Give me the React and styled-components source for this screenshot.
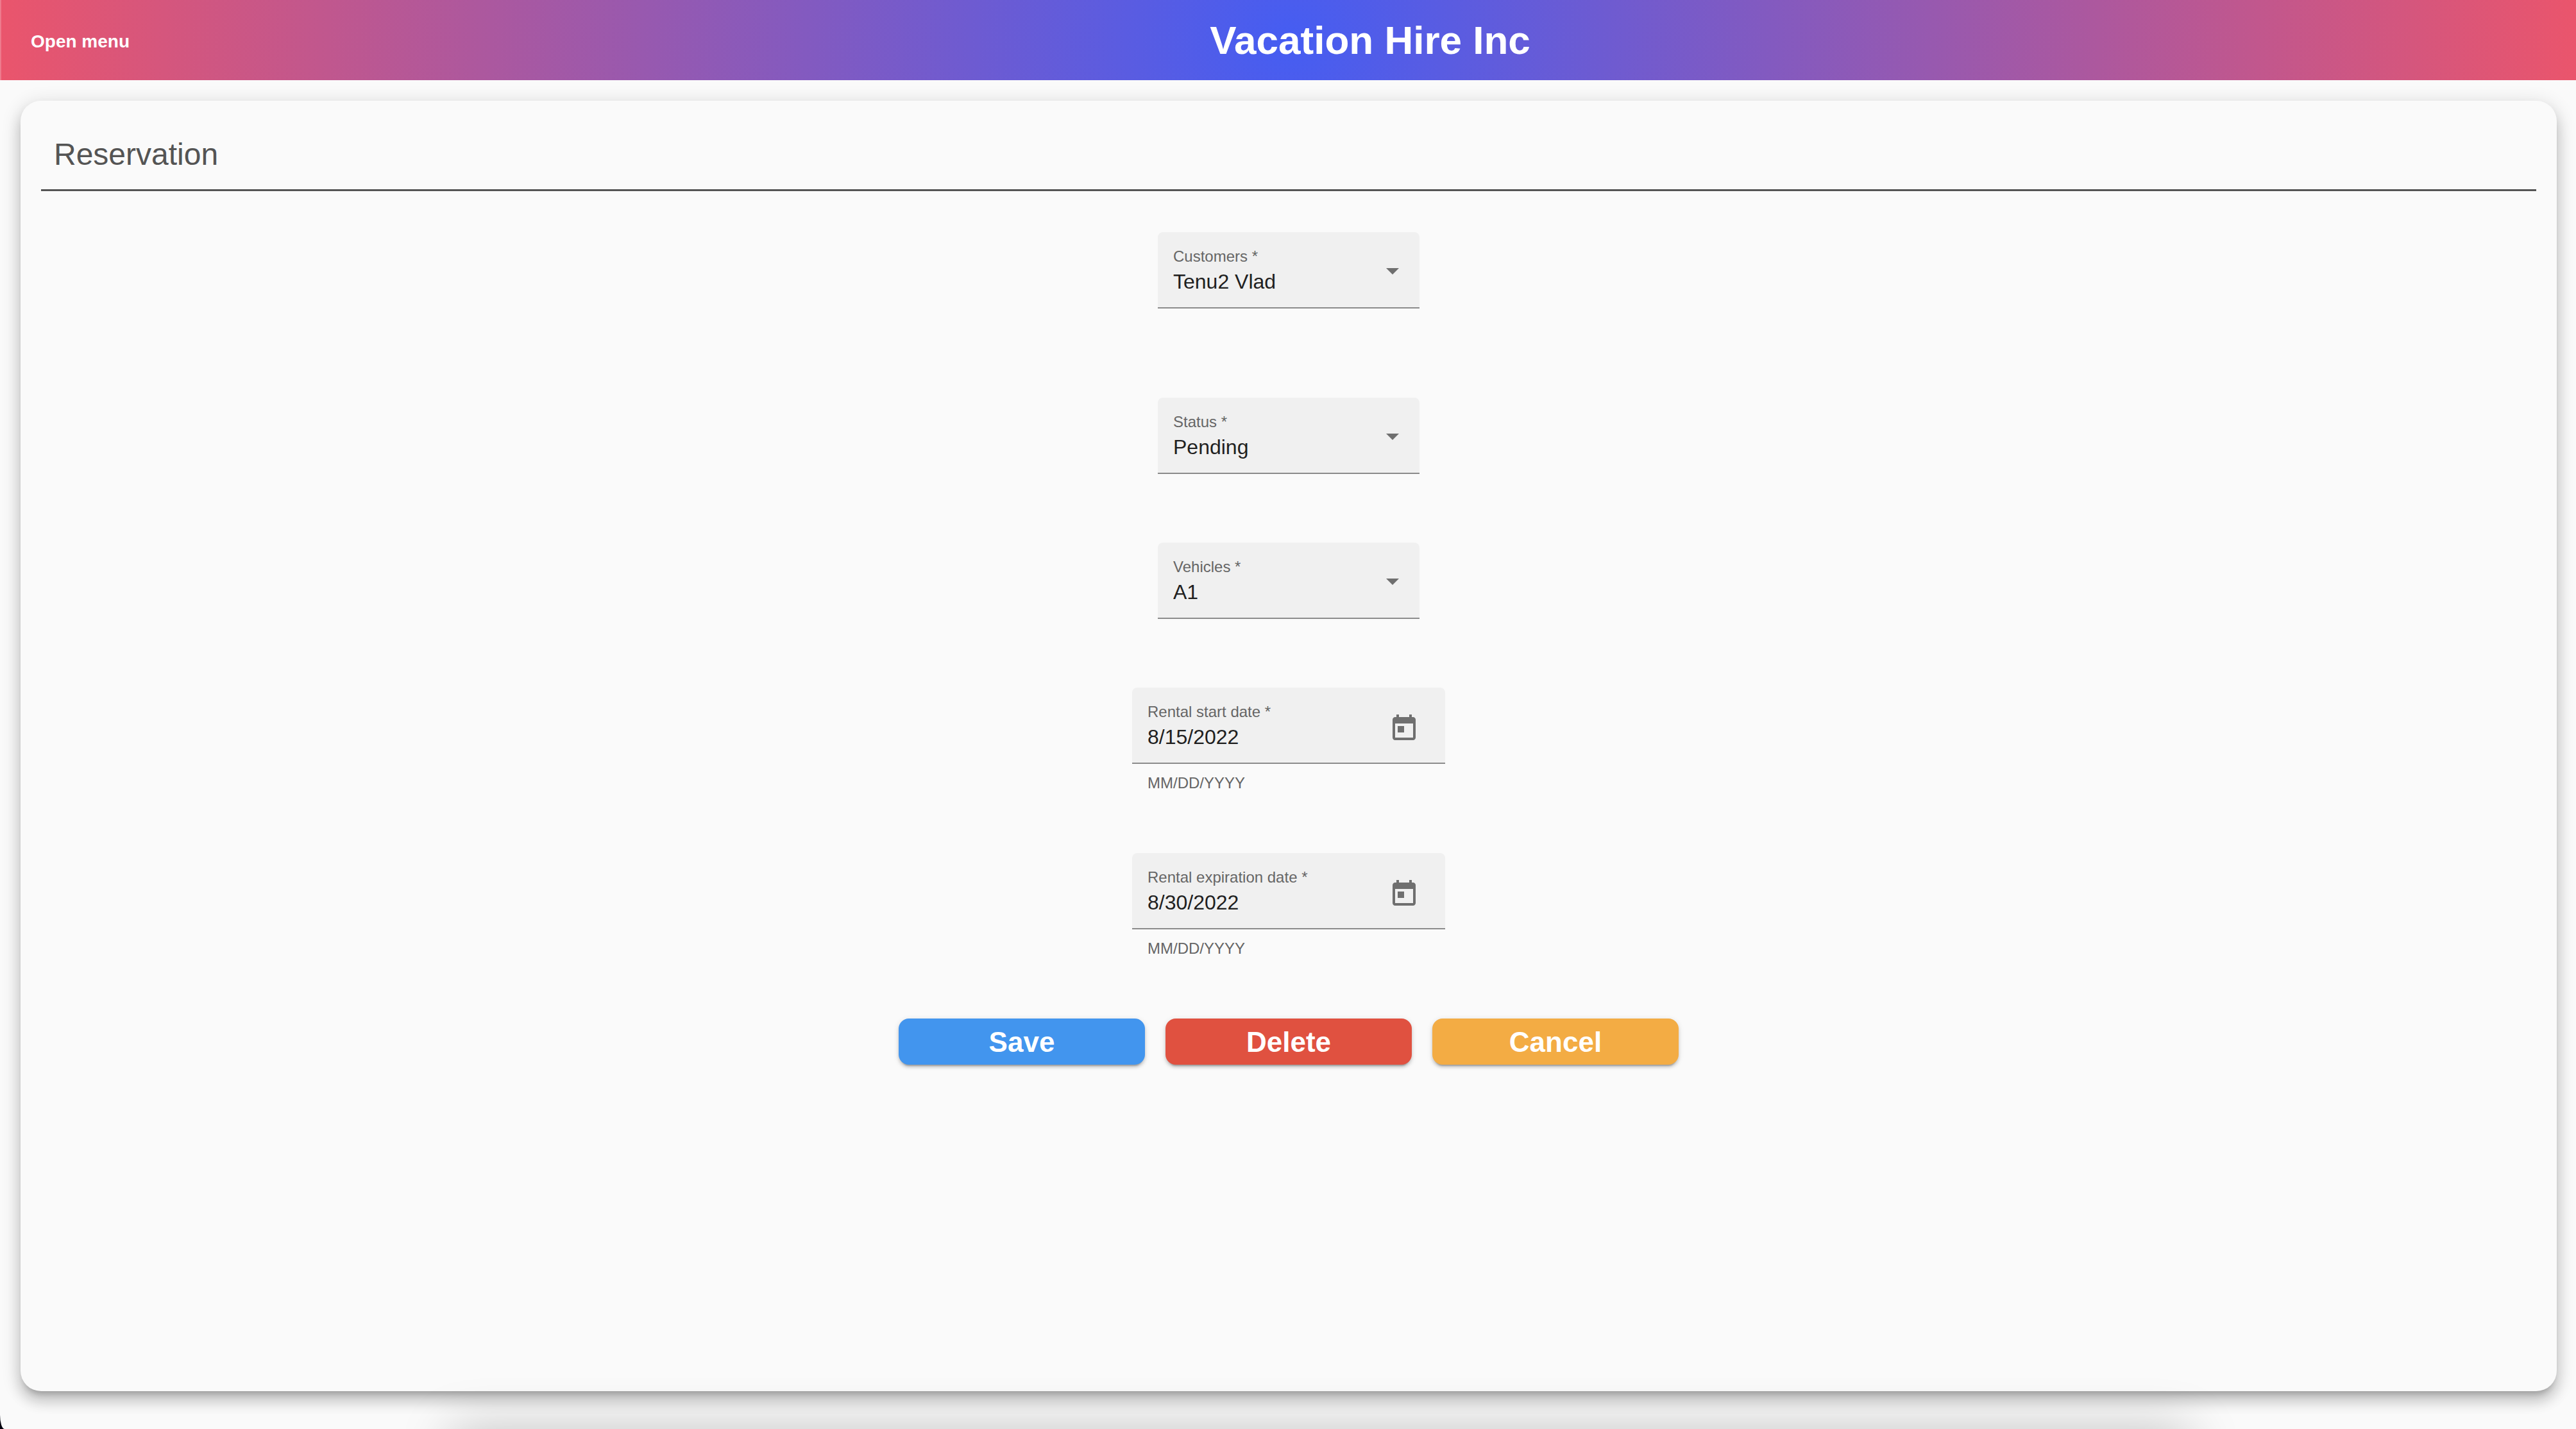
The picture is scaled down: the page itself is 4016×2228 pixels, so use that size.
import React, { useState } from "react";
import styled, { createGlobalStyle } from "styled-components";

const GlobalStyle = createGlobalStyle`
  *, *::before, *::after { box-sizing: border-box; }
  html { background: #05040f; }
  body {
    margin: 0;
    font-family: "Helvetica Neue", "Liberation Sans", Arial, sans-serif;
    color: #1f1f1f;
  }
  button, input, select { font-family: inherit; }
`;

const Page = styled.div`
  position: relative;
  display: flex;
  flex-direction: column;
  min-height: 100vh;
  overflow: hidden;
  background: #fafafa;
  border-bottom-left-radius: 7px 22px;

  /* soft shade rising from the bottom edge of the window */
  &::after {
    content: "";
    position: absolute;
    top: 100%;
    left: 17.5%;
    right: 15%;
    height: 200px;
    box-shadow: 0 0 80px rgba(0, 0, 0, 0.22);
    pointer-events: none;
  }
`;

const Header = styled.header`
  display: flex;
  align-items: center;
  gap: 8px;
  height: 125px;
  border-left: 2px solid #ee7a8d;
  background: radial-gradient(circle, #455df2 0%, #ea556c 100%);
  color: #ffffff;
`;

const MenuButton = styled.button`
  padding: 4px 46px 0;
  height: 72px;
  border: 0;
  background: transparent;
  color: inherit;
  font-size: 28px;
  font-weight: 700;
  cursor: pointer;
`;

const Brand = styled.h1`
  flex: 1;
  margin: 0;
  font-size: 62px;
  font-weight: 700;
  line-height: 72px;
  text-align: center;
`;

const Card = styled.main`
  flex: 1;
  margin: 32px 30px 59px 32px;
  padding: 32px;
  border-radius: 32px;
  background: #fafafa;
  box-shadow:
    0 10px 10px -6px rgba(0, 0, 0, 0.2),
    0 16px 20px 2px rgba(0, 0, 0, 0.14),
    0 6px 28px 4px rgba(0, 0, 0, 0.12);
`;

const CardTitle = styled.h2`
  margin: 0;
  padding: 24px 20px 26px;
  border-bottom: 3px solid #545454;
  color: #545454;
  font-size: 48px;
  font-weight: 400;
  line-height: 56px;
`;

const Form = styled.form`
  display: flex;
  flex-direction: column;
  align-items: center;
  padding-top: 64px;
`;

const FieldGroup = styled.div`
  width: ${({ $wide }) => ($wide ? "488px" : "408px")};
  margin-bottom: ${({ $spaced }) => ($spaced ? "32px" : "0")};
`;

const FieldBox = styled.div`
  display: flex;
  align-items: flex-start;
  padding: 24px 24px 22px;
  height: 119px;
  border-bottom: 2px solid #8b8b8b;
  border-radius: 8px 8px 0 0;
  background: #f0f0f0;
`;

const FieldText = styled.div`
  flex: 1;
  min-width: 0;
  display: flex;
  flex-direction: column;
  gap: 7px;
`;

const FieldLabel = styled.label`
  color: #666666;
  font-size: 24px;
  line-height: 28px;
`;

const Select = styled.select`
  appearance: none;
  width: 100%;
  height: 36px;
  padding: 0;
  border: 0;
  outline: 0;
  background: transparent;
  color: #1f1f1f;
  font-size: 32px;
  line-height: 36px;
`;

const DateInput = styled.input`
  width: 100%;
  height: 36px;
  padding: 0;
  border: 0;
  outline: 0;
  background: transparent;
  color: #1f1f1f;
  font-size: 32px;
  line-height: 36px;
`;

const Arrow = styled.svg`
  width: 20px;
  height: 48px;
  margin: 16px 8px 0;
  fill: #6f6f6f;
  pointer-events: none;
`;

const CalendarButton = styled.button`
  display: flex;
  align-items: center;
  justify-content: center;
  width: 80px;
  height: 80px;
  padding: 0;
  border: 0;
  border-radius: 50%;
  background: transparent;
  color: #6f6f6f;
  cursor: pointer;

  svg {
    width: 48px;
    height: 48px;
    fill: currentColor;
  }
`;

const HintArea = styled.div`
  height: 107px;
  padding: 16px 24px 0;
  color: #666666;
  font-size: 24px;
  line-height: 28px;
`;

const Actions = styled.div`
  display: flex;
  gap: 32px;
`;

const ActionButton = styled.button`
  width: 384px;
  height: 72px;
  padding: 2px 0 0;
  border: 0;
  border-radius: 16px;
  background: ${({ $color }) => $color};
  color: #ffffff;
  font-size: 44px;
  font-weight: 700;
  cursor: pointer;
  box-shadow:
    0 6px 2px -4px rgba(0, 0, 0, 0.2),
    0 4px 4px 0 rgba(0, 0, 0, 0.14),
    0 2px 10px 0 rgba(0, 0, 0, 0.12);
`;

function SelectField({ id, label, options, spaced }) {
  return (
    <FieldGroup $spaced={spaced}>
      <FieldBox>
        <FieldText>
          <FieldLabel htmlFor={id}>{label} *</FieldLabel>
          <Select id={id} defaultValue={options[0]} required>
            {options.map((option) => (
              <option key={option}>{option}</option>
            ))}
          </Select>
        </FieldText>
        <Arrow viewBox="0 0 20 48" aria-hidden="true">
          <path d="M0 16h20L10 26z" />
        </Arrow>
      </FieldBox>
      <HintArea />
    </FieldGroup>
  );
}

function DateField({ id, label, initial }) {
  const [value, setValue] = useState(initial);
  return (
    <FieldGroup $wide $spaced>
      <FieldBox>
        <FieldText>
          <FieldLabel htmlFor={id}>{label} *</FieldLabel>
          <DateInput
            id={id}
            type="text"
            value={value}
            onChange={(event) => setValue(event.target.value)}
            aria-describedby={`${id}-hint`}
            required
          />
        </FieldText>
        <CalendarButton type="button" aria-label="Open calendar">
          <svg viewBox="0 0 24 24" aria-hidden="true">
            <path d="M19 3h-1V1h-2v2H8V1H6v2H5c-1.11 0-1.99.9-1.99 2L3 19c0 1.1.89 2 2 2h14c1.1 0 2-.9 2-2V5c0-1.1-.9-2-2-2zm0 16H5V8h14v11zM7 10h5v5H7z" />
          </svg>
        </CalendarButton>
      </FieldBox>
      <HintArea id={`${id}-hint`}>MM/DD/YYYY</HintArea>
    </FieldGroup>
  );
}

export default function App() {
  return (
    <>
      <GlobalStyle />
      <Page>
        <Header>
          <MenuButton type="button">Open menu</MenuButton>
          <Brand>Vacation Hire Inc</Brand>
        </Header>
        <Card>
          <CardTitle>Reservation</CardTitle>
          <Form onSubmit={(event) => event.preventDefault()}>
            <SelectField id="customer" label="Customers" options={["Tenu2 Vlad"]} spaced />
            <SelectField id="status" label="Status" options={["Pending"]} />
            <SelectField id="vehicle" label="Vehicles" options={["A1"]} />
            <DateField id="start" label="Rental start date" initial="8/15/2022" />
            <DateField id="expiration" label="Rental expiration date" initial="8/30/2022" />
            <Actions>
              <ActionButton type="submit" $color="#4295ee">Save</ActionButton>
              <ActionButton type="button" $color="#e05140">Delete</ActionButton>
              <ActionButton type="button" $color="#f3ac44">Cancel</ActionButton>
            </Actions>
          </Form>
        </Card>
      </Page>
    </>
  );
}
